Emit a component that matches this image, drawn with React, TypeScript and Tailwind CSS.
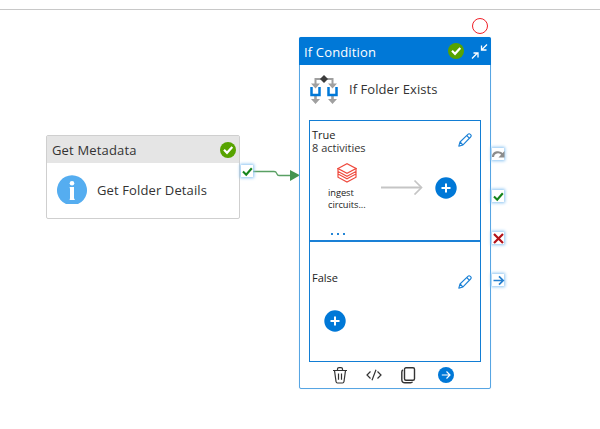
import React from "react";

function StatusCheck() {
  return (
    <svg width="16" height="16" viewBox="0 0 16 16" className="shrink-0">
      <circle cx="8" cy="8" r="8" fill="#57a300" />
      <path d="M4 7.8 7 10.8 12.3 5" fill="none" stroke="#fff" strokeWidth="2.2" />
    </svg>
  );
}

function Port({ className, children }: { className: string; children: React.ReactNode }) {
  return (
    <div className={`absolute flex size-[12px] items-center justify-center bg-white shadow-[0_0_3px_1px_#8cc4f2] ${className}`}>
      <svg width="13" height="13" viewBox="0 0 13 13" fill="none" className="shrink-0">
        {children}
      </svg>
    </div>
  );
}

function AddButton() {
  return (
    <svg width="22" height="22" viewBox="0 0 22 22" className="shrink-0">
      <circle cx="11" cy="11" r="10.7" fill="#0078d7" />
      <path d="M11 6.5v9M6.5 11h9" stroke="#fff" strokeWidth="2" />
    </svg>
  );
}

function Pencil() {
  return (
    <svg width="14" height="14" viewBox="0 0 14 14" fill="none" stroke="#1a80d6" strokeWidth="1.1" strokeLinejoin="round" className="shrink-0">
      <path d="M.8 13.2 2 9 9.9 1.3c.7-.7 1.7-.7 2.4 0l.3.3c.7.7.7 1.7 0 2.4L5 11.9zM2.1 9l2.8 2.9M8.700 2.500l2.800 2.800" />
    </svg>
  );
}

function ConditionIcon() {
  return (
    <svg width="28" height="30" viewBox="0 0 28 30" fill="none" className="shrink-0">
      <path d="M5.500 10V4h17v6" stroke="#a0a0a0" strokeWidth="2" />
      <path d="M1 8.500h9l-4.500 5zM18 8.500h9l-4.500 5zM1 24h9l-4.500 5zM18 24h9l-4.500 5z" fill="#a0a0a0" />
      <path d="M5.500 21v4M22.500 21v4" stroke="#a0a0a0" strokeWidth="2.600" />
      <path d="M1.500 12v8h8v-8M18.500 12v8h8v-8" stroke="#0078d7" strokeWidth="2.500" />
      <path d="m14 0 4 4-4 4-4-4z" fill="#3c3c3c" />
    </svg>
  );
}

export default function App() {
  return (
    <main className="relative h-[429px] w-[600px] overflow-hidden bg-white font-['Open_Sans','Noto_Sans',sans-serif] text-[13px] leading-none whitespace-nowrap text-[#333]">
      <div className="h-[10px] border-b border-[#c8c8c8]" />

      <section className="absolute left-[46px] top-[135px] h-[84px] w-[194px] rounded-[2px] border border-[#cfcfcf] bg-white">
        <header className="flex h-[27px] items-center justify-between bg-[#e5e5e5] pl-[5px] pr-[3px] pt-[1px]">
          <span className="tracking-[0.17px]">Get Metadata</span>
          <StatusCheck />
        </header>
        <div className="flex h-[54px] items-center gap-[10px] pl-[10px]">
          <svg width="30" height="30" viewBox="0 0 30 30" className="shrink-0">
            <path d="M9 29A15 15 0 1 1 21 29z" fill="#55adf0" />
            <circle cx="15" cy="8.200" r="2.300" fill="#fff" />
            <path d="M12.700 12H17v11.800h.7V25h-5v-1.200h.3V13.200h-.3z" fill="#fff" />
          </svg>
          <span className="tracking-[0.12px]">Get Folder Details</span>
        </div>
      </section>

      <svg width="60" height="20" viewBox="0 0 60 20" fill="none" className="absolute left-[250px] top-[165px]">
        <path d="M3 6.500h21q2 0 2.500 1.500l.5 1q.5 1.500 2 1.500h13" stroke="#59a063" strokeWidth="1.300" />
        <path d="m40 5 10 5.300L40 16z" fill="#439450" />
      </svg>

      <section className="absolute left-[299px] top-[37px] h-[352px] w-[192px] rounded-[2px] border border-[#57a5e3] bg-white shadow-[0_0_1px_#b8dcf8]">
        <header className="-mx-px -mt-px flex h-[28px] items-center rounded-t-[2px] bg-[#0078d7] pl-[5px] pr-[3px]">
          <span className="flex-1 pt-[2px] font-medium tracking-[0.15px] text-white">If Condition</span>
          <StatusCheck />
          <svg width="17" height="17" viewBox="0 0 17 17" fill="none" stroke="#fff" strokeWidth="1.300" className="ml-[7px]">
            <path d="m16 1.500-5.200 5.200M10.500 2.500v4.500h5M1 15.500l5.200-5.200M2.500 10h4.500v4.500" />
          </svg>
        </header>
        <div className="flex h-[55px] items-center gap-[11px] pl-[10px]">
          <div className="-mt-[5px]"><ConditionIcon /></div>
          <span className="-mt-[6px] tracking-[0.06px]">If Folder Exists</span>
        </div>
        <div className="mx-[9px] h-[242px] border border-[#127dd4]">
          <div className="flex h-[121px] flex-col border-b-2 border-[#1a80d6]">
            <div className="flex h-[39px] items-start justify-between pl-[2px] pr-[8px]">
              <div className="flex flex-col pt-[7px] text-[11px] leading-[13px]">
                <span className="font-medium text-[#222]">True</span>
                <span>8 activities</span>
              </div>
              <div className="pt-[12px]"><Pencil /></div>
            </div>
            <div className="flex h-[62px] items-start">
              <div className="flex w-[73px] flex-col pl-[18px] pt-[3px]">
                <svg width="20" height="20" viewBox="0 0 20 20" fill="none" stroke="#ef4b3f" strokeWidth="1.200" className="ml-[9px] shrink-0">
                  <path d="m1 5.500 9-4.800 9 4.800-9 4.700z" />
                  <path d="M1 5.500v3l9 4.700 9-4.700v-3M1 8.500V11l9 4.700 9-4.700V8.500M1 11v3.200L10 19l9-4.800V11" />
                </svg>
                <span className="mt-[4px] text-[9.300px] leading-[12px] tracking-[-0.05px] text-[#222]">ingest<br />circuits...</span>
              </div>
              <svg width="42" height="16" viewBox="0 0 42 16" fill="none" stroke="#c5c5c5" className="-ml-[2px] mt-[19px] shrink-0">
                <path d="M0 8.500h40" strokeWidth="2" />
                <path d="m33.500 1.500 7 7-7 7" strokeWidth="1.700" />
              </svg>
              <div className="ml-[12px] mt-[17px]"><AddButton /></div>
            </div>
            <div className="flex h-[18px] items-center gap-[4px] pl-[21px] pt-[5px]">
              <i className="size-[2px] bg-[#2586d6]" />
              <i className="size-[2px] bg-[#2586d6]" />
              <i className="size-[2px] bg-[#2586d6]" />
            </div>
          </div>
          <div className="flex h-[119px] flex-col">
            <div className="flex items-start justify-between pl-[2px] pr-[8px] pt-[28px]">
              <span className="pt-[1px] text-[11px] leading-[13px] font-medium text-[#222]">False</span>
              <div className="pt-[5px]"><Pencil /></div>
            </div>
            <div className="pl-[14px] pt-[21px]"><AddButton /></div>
          </div>
        </div>
        <footer className="flex h-[26px] items-start pl-[33px] pt-[5px]">
          <svg width="14" height="17" viewBox="0 0 14 17" fill="none" stroke="#333" strokeWidth="1.200">
            <path d="M0 3.500h14M4.500 3.200V2q0-1.400 1.500-1.400h2Q9.500.6 9.500 2v1.200M1.500 3.500 3 14.500q.2 1.500 1.500 1.500h5q1.300 0 1.500-1.500l1.500-11M5.500 6.500v6.300M8.500 6.500v6.300" />
          </svg>
          <svg width="16" height="12" viewBox="0 0 16 12" fill="none" stroke="#333" strokeWidth="1.200" className="ml-[19px] mt-[2px]">
            <path d="M4.500 2.500 1 6l3.500 3.500M11.500 2.500 15 6l-3.500 3.500M10 .8 6 11.200" />
          </svg>
          <svg width="15" height="17" viewBox="0 0 15 17" fill="none" stroke="#333" strokeWidth="1.400" className="ml-[19px]">
            <rect x="3.500" y=".8" width="10" height="12.500" rx="1.500" />
            <path d="M2 3q-1.200.5-1.200 2v7.500q0 3.300 3.200 3.300h5.500q1.500 0 2-1" />
          </svg>
          <svg width="16" height="16" viewBox="0 0 16 16" fill="none" className="ml-[22px]">
            <circle cx="8" cy="8" r="8" fill="#0078d7" />
            <path d="M3.800 8h8M8.500 4.500 12 8l-3.500 3.500" stroke="#fff" strokeWidth="1.200" />
          </svg>
        </footer>
      </section>

      <div className="absolute left-[472px] top-[18px] size-[16px] rounded-full border border-[#f02028]" />

      <Port className="left-[241px] top-[165px]">
        <path d="m2 6.500 3.200 3.200 5.600-6.500" stroke="#14841b" strokeWidth="2.100" />
      </Port>
      <Port className="left-[492px] top-[148px]">
        <path d="M1 9c0-5.500 7-6 9.500-2.500" stroke="#8c8c8c" strokeWidth="2.200" />
        <path d="M12.500 3v6.500H6.500z" fill="#8c8c8c" />
      </Port>
      <Port className="left-[492px] top-[190px]">
        <path d="m2 6.500 3.200 3.200 5.600-6.500" stroke="#14841b" strokeWidth="2.100" />
      </Port>
      <Port className="left-[492px] top-[232px]">
        <path d="m2 2 9 9M11 2 2 11" stroke="#b31219" strokeWidth="2.200" />
      </Port>
      <Port className="left-[492px] top-[274px]">
        <path d="M1.500 6.500h9.500M7 2.300l4.200 4.200L7 10.700" stroke="#2680cf" strokeWidth="1.700" />
      </Port>
    </main>
  );
}
